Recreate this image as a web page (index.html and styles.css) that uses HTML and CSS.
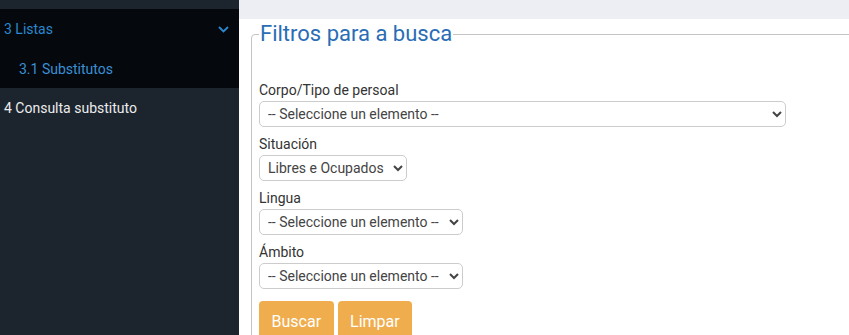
FILE: index.html
```html
<!DOCTYPE html>
<html lang="gl">

<head>
  <meta charset="UTF-8">
  <title>Consulta substitutos</title>
  <meta name="viewport" content="width=device-width, initial-scale=1.0">
  <link rel="stylesheet" href="styles.css">
</head>

<body>
  <aside class="sidebar">
    <div class="menu-open">
      <div class="menu-item active">
        <span>3 Listas</span>
        <svg class="chevron" width="11" height="7" viewBox="0 0 11 7">
          <path d="M1 1l4.5 4.5L10 1" fill="none" stroke="currentColor" stroke-width="1.8" />
        </svg>
      </div>
      <div class="menu-sub">3.1 Substitutos</div>
    </div>
    <div class="menu-item">4 Consulta substituto</div>
  </aside>

  <main class="main">
    <div class="topbar"></div>
    <div class="content">
      <fieldset class="filters">
        <legend>Filtros para a busca</legend>
        <div class="form-body">
          <div class="form-group">
            <label for="corpo">Corpo/Tipo de persoal</label>
            <select id="corpo" class="select-wide">
              <option>-- Seleccione un elemento --</option>
            </select>
          </div>
          <div class="form-group">
            <label for="situacion">Situación</label>
            <select id="situacion" class="select-small">
              <option>Libres e Ocupados</option>
            </select>
          </div>
          <div class="form-group">
            <label for="lingua">Lingua</label>
            <select id="lingua" class="select-mid">
              <option>-- Seleccione un elemento --</option>
            </select>
          </div>
          <div class="form-group">
            <label for="ambito">Ámbito</label>
            <select id="ambito" class="select-mid">
              <option>-- Seleccione un elemento --</option>
            </select>
          </div>
          <div class="actions">
            <button type="button">Buscar</button>
            <button type="button">Limpar</button>
          </div>
        </div>
      </fieldset>
    </div>
  </main>
</body>

</html>
```

FILE: styles.css
```css
* {
  box-sizing: border-box;
}

body {
  margin: 0;
  height: 100vh;
  display: flex;
  overflow: hidden;
  background: white;
  font-family: Roboto, 'Liberation Sans', sans-serif;
  font-size: 14px;
  color: #333;
}

.sidebar {
  width: 239px;
  flex-shrink: 0;
  background: #1c252e;
  padding-top: 9px;
}

.menu-open {
  background: #05090d;
}

.menu-item {
  height: 40px;
  padding: 0 4px;
  display: flex;
  align-items: center;
  justify-content: space-between;
  color: #ececec;
}

.menu-item.active {
  color: #2b87cf;
}

.chevron {
  margin-right: 6px;
  color: #2b87cf;
}

.menu-sub {
  height: 39px;
  padding-left: 19px;
  display: flex;
  align-items: center;
  color: #3a8fd6;
}

.main {
  flex: 1;
  min-width: 0;
  overflow: hidden;
}

.topbar {
  height: 19px;
  background: #eceef3;
}

.content {
  padding: 1px 0 0 12px;
}

.filters {
  margin: 0 -20px 0 0;
  padding: 0 7px 20px;
  border: 1px solid #c4c4c4;
  border-radius: 4px;
}

.filters legend {
  padding: 0 1px;
  font-size: 22px;
  line-height: 28px;
  color: #2a6db5;
}

.form-body {
  padding-top: 31px;
}

.form-group {
  display: flex;
  flex-direction: column;
  align-items: flex-start;
  margin-bottom: 6px;
}

label {
  line-height: 22px;
}

select {
  height: 26px;
  padding: 0 4px;
  border: 1px solid #ccc;
  border-radius: 5px;
  background: white;
  font-family: inherit;
  font-size: 14px;
  color: #444;
}

.select-wide {
  width: 527px;
}

.select-small {
  width: 148px;
}

.select-mid {
  width: 204px;
}

.actions {
  display: flex;
  gap: 4px;
  margin-top: 12px;
}

button {
  padding: 10px 12.5px;
  background: #f0ad4e;
  color: white;
  border: none;
  border-radius: 4px;
  font-family: inherit;
  font-size: 16px;
  line-height: 22px;
  cursor: pointer;
}
```
